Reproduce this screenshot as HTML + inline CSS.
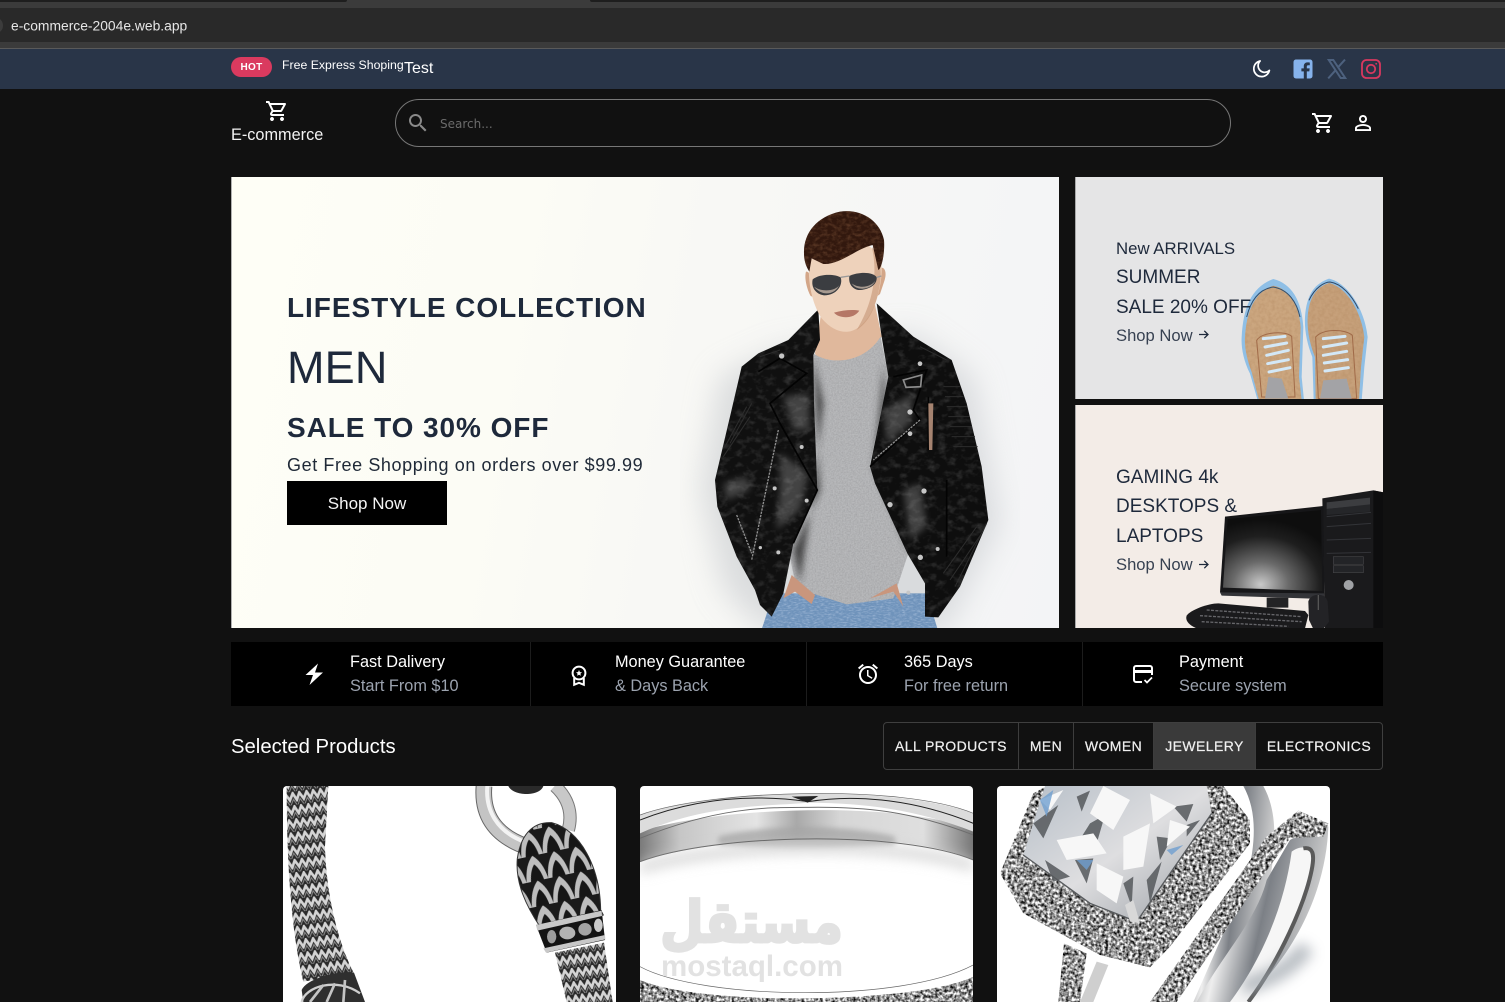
<!DOCTYPE html>
<html lang="en"><head><meta charset="utf-8"><title>E-commerce</title>
<style>
html,body{margin:0;padding:0;background:#111;}
body{width:1505px;height:1002px;position:relative;overflow:hidden;font-family:"Liberation Sans",Arial,sans-serif;color:#fff;}
.a{position:absolute;white-space:nowrap;}
.box{position:absolute;overflow:hidden;}
svg{display:block;}
.t{position:absolute;white-space:nowrap;color:#1e293b;line-height:30px;height:30px;}
.ft{position:absolute;white-space:nowrap;font-size:16.300px;line-height:24px;color:#fff;}
.fs{position:absolute;white-space:nowrap;font-size:16.300px;line-height:24px;color:#9ca3af;}
.tab{position:absolute;top:723px;height:46px;line-height:46px;font-size:14px;letter-spacing:.42px;text-align:center;color:#f0f0f0;border-right:1px solid #3d3d3d;box-sizing:border-box;-webkit-text-stroke:.2px #f0f0f0;}
</style></head><body>

<!-- browser chrome -->
<div class="box" style="left:0;top:0;width:1505px;height:8px;background:#3b3b3b"></div>
<div class="box" style="left:0;top:0;width:347px;height:2px;background:#1e1e1e;border-radius:0 0 6px 0"></div>
<div class="box" style="left:590px;top:0;width:915px;height:2px;background:#1e1e1e;border-radius:0 0 0 6px"></div>
<div class="box" style="left:0;top:8px;width:1505px;height:34px;background:#292929"></div>
<div class="box" style="left:-10px;top:18px;width:13px;height:15px;border-radius:50%;background:#3c3c3c"></div>
<div class="a" style="left:11px;top:16px;font-size:13.850px;line-height:18px;color:#e6e6e6;transform:translateY(.5px)">e-commerce-2004e.web.app</div>
<div class="box" style="left:0;top:42px;width:1505px;height:6px;background:#3b3b3b"></div>
<div class="box" style="left:0;top:48px;width:1505px;height:1px;background:#5a5a5a"></div>

<!-- top header -->
<div class="box" style="left:0;top:49px;width:1505px;height:40px;background:#293548"></div>
<div class="a" style="left:231px;top:57px;width:41px;height:20px;border-radius:10px;background:#da3a5f;text-align:center;font-size:10px;font-weight:700;line-height:21px;letter-spacing:.3px">HOT</div>
<div class="a" style="left:282px;top:57px;font-size:12.300px;line-height:16px;color:#fff">Free Express Shoping</div>
<div class="a" style="left:404px;top:59px;font-size:16px;line-height:18px;color:#fff;transform:translateY(1px)">Test</div>

<svg class="a" style="left:1251px;top:58px" width="21" height="21" viewBox="0 0 24 24" fill="none" stroke="#fff" stroke-width="2" stroke-linejoin="round"><path d="M21 14.200A9 9 0 1 1 10.400 3.400 7 7 0 0 0 21 14.200z"/></svg>
<svg class="a" style="left:1293px;top:59px" width="20" height="20" viewBox="0 0 20 20"><rect x=".5" y=".5" width="19" height="19" rx="2.500" fill="#86b3ec"/><path d="M13.800 20V12.400H16.300L16.700 9.400H13.800V7.600C13.800 6.700 14.100 6.200 15.300 6.200H16.800V3.500C16.400 3.450 15.600 3.400 14.600 3.400 12.400 3.400 10.800 4.700 10.800 7.200V9.400H8.400V12.400H10.800V20Z" fill="#293548"/></svg>
<svg class="a" style="left:1327px;top:59px" width="20" height="20" viewBox="0 0 20 20" fill="none" stroke="#4d617e" stroke-width="2"><path d="M1.800 1H6.300L18.200 19H13.700Z"/><path d="M18 .6L10.900 8.400M8.700 11.100L1.200 19.400"/></svg>
<svg class="a" style="left:1361px;top:59px" width="20" height="20" viewBox="0 0 20 20" fill="none" stroke="#d8385f" stroke-width="1.800"><rect x="1" y="1" width="18" height="18" rx="4.500"/><circle cx="10" cy="10" r="4.200"/><circle cx="15.200" cy="4.800" r=".9" fill="#d8385f" stroke="none"/></svg>

<!-- main header -->
<svg class="a" style="left:265px;top:99px" width="24" height="24" viewBox="0 0 24 24" fill="#fff"><path d="M15.550 13c.75 0 1.410-.41 1.750-1.030l3.580-6.490c.37-.66-.11-1.480-.87-1.480H5.210l-.94-2H1v2h2l3.600 7.590-1.350 2.440C4.520 15.370 5.48 17 7 17h12v-2H7l1.100-2h7.450zM6.160 6h12.150l-2.760 5H8.530L6.160 6zM7 18c-1.100 0-1.990.9-1.990 2s.89 2 1.990 2 2-.9 2-2-.9-2-2-2zm10 0c-1.100 0-1.990.9-1.990 2s.89 2 1.990 2 2-.9 2-2-.9-2-2-2z"/></svg>
<div class="a" style="left:231px;top:125px;font-size:16.300px;line-height:20px;color:#f2f2f2">E-commerce</div>
<div class="box" style="left:395px;top:99px;width:836px;height:48px;box-sizing:border-box;border:1px solid #777;border-radius:24px"></div>
<svg class="a" style="left:406px;top:111px" width="24" height="24" viewBox="0 0 24 24" fill="#8a8a8a"><path d="M15.500 14h-.79l-.28-.27C15.410 12.590 16 11.110 16 9.500 16 5.910 13.090 3 9.500 3S3 5.910 3 9.500 5.910 16 9.500 16c1.610 0 3.090-.59 4.230-1.570l.27.28v.79l5 4.990L20.490 19l-4.990-5zm-6 0C7.010 14 5 11.990 5 9.500S7.010 5 9.500 5 14 7.010 14 9.500 11.990 14 9.500 14z"/></svg>
<div class="a" style="left:440px;top:116px;font-family:'DejaVu Sans',sans-serif;font-size:12px;line-height:16px;color:#6b6b6b">Search...</div>
<svg class="a" style="left:1311px;top:111px" width="24" height="24" viewBox="0 0 24 24" fill="#fff"><path d="M15.550 13c.75 0 1.410-.41 1.750-1.030l3.580-6.490c.37-.66-.11-1.480-.87-1.480H5.210l-.94-2H1v2h2l3.600 7.590-1.350 2.440C4.520 15.370 5.48 17 7 17h12v-2H7l1.100-2h7.450zM6.160 6h12.150l-2.760 5H8.530L6.160 6zM7 18c-1.100 0-1.990.9-1.990 2s.89 2 1.990 2 2-.9 2-2-.9-2-2-2zm10 0c-1.100 0-1.990.9-1.990 2s.89 2 1.990 2 2-.9 2-2-.9-2-2-2z"/></svg>
<svg class="a" style="left:1351px;top:111px" width="24" height="24" viewBox="0 0 24 24" fill="#fff"><path d="M12 5.900c1.160 0 2.100.94 2.100 2.100s-.94 2.100-2.100 2.100S9.900 9.160 9.900 8s.94-2.100 2.100-2.100m0 9c2.970 0 6.100 1.460 6.100 2.100v1.100H5.900V17c0-.64 3.130-2.100 6.100-2.100M12 4C9.790 4 8 5.790 8 8s1.790 4 4 4 4-1.790 4-4-1.790-4-4-4zm0 9c-2.670 0-8 1.340-8 4v3h16v-3c0-2.660-5.330-4-8-4z"/></svg>

<!-- shared SVG filters -->
<svg width="0" height="0" style="position:absolute">
<defs>
<filter id="tee" x="0" y="0" width="100%" height="100%" color-interpolation-filters="sRGB"><feTurbulence type="fractalNoise" baseFrequency=".22" numOctaves="2" seed="4"/><feColorMatrix values="0 0 0 0 .55  0 0 0 0 .55  0 0 0 0 .56  .8 0 0 0 -.25"/><feComposite in2="SourceGraphic" operator="in" result="n"/><feMerge><feMergeNode in="SourceGraphic"/><feMergeNode in="n"/></feMerge></filter>
<filter id="leather" x="0" y="0" width="100%" height="100%" color-interpolation-filters="sRGB"><feTurbulence type="fractalNoise" baseFrequency=".035 .05" numOctaves="3" seed="9"/><feColorMatrix values="0 0 0 0 .36  0 0 0 0 .36  0 0 0 0 .36  1.100 0 0 0 -.52"/><feComposite in2="SourceGraphic" operator="in" result="n"/><feMerge><feMergeNode in="SourceGraphic"/><feMergeNode in="n"/></feMerge></filter>
<filter id="pave" x="0" y="0" width="100%" height="100%" color-interpolation-filters="sRGB"><feTurbulence type="fractalNoise" baseFrequency=".11" numOctaves="2" seed="3"/><feColorMatrix values="2 0 0 0 -.42  2 0 0 0 -.42  2 0 0 0 -.42  0 0 0 0 1"/><feComposite in2="SourceGraphic" operator="in"/></filter>
<filter id="jean" x="0" y="0" width="100%" height="100%" color-interpolation-filters="sRGB"><feTurbulence type="fractalNoise" baseFrequency=".09 .25" numOctaves="2" seed="5"/><feColorMatrix values="0 0 0 0 .82  0 0 0 0 .87  0 0 0 0 .95  1 0 0 0 -.42"/><feComposite in2="SourceGraphic" operator="in" result="n"/><feMerge><feMergeNode in="SourceGraphic"/><feMergeNode in="n"/></feMerge></filter>
<filter id="hair" x="0" y="0" width="100%" height="100%" color-interpolation-filters="sRGB"><feTurbulence type="fractalNoise" baseFrequency=".07 .1" numOctaves="3" seed="8"/><feColorMatrix values="0 0 0 0 .42  0 0 0 0 .27  0 0 0 0 .18  1.500 0 0 0 -.6"/><feComposite in2="SourceGraphic" operator="in" result="n"/><feMerge><feMergeNode in="SourceGraphic"/><feMergeNode in="n"/></feMerge></filter>
<filter id="fine" x="0" y="0" width="100%" height="100%" color-interpolation-filters="sRGB"><feTurbulence type="fractalNoise" baseFrequency=".1" numOctaves="2" seed="6"/><feColorMatrix values="0 0 0 0 .66  0 0 0 0 .49  0 0 0 0 .33  .6 0 0 0 -.22"/><feComposite in2="SourceGraphic" operator="in" result="n"/><feMerge><feMergeNode in="SourceGraphic"/><feMergeNode in="n"/></feMerge></filter>
<filter id="b4" x="-50%" y="-50%" width="200%" height="200%"><feGaussianBlur stdDeviation="10"/></filter>
<filter id="b8" x="-30%" y="-150%" width="160%" height="400%"><feGaussianBlur stdDeviation="8"/></filter>
<filter id="b20" x="-100%" y="-300%" width="300%" height="700%"><feGaussianBlur stdDeviation="20"/></filter>
<filter id="b40" x="-50%" y="-50%" width="200%" height="200%"><feGaussianBlur stdDeviation="45"/></filter>
</defs>
</svg>

<!-- hero -->
<div class="box" style="left:231px;top:177px;width:828px;height:451px;background:linear-gradient(100deg,#fefef6 0%,#fcfcf5 32%,#f8f8f5 55%,#f3f4f6 100%);box-shadow:inset 1px 0 0 #b0b0b0">
<svg style="position:absolute;left:449px;top:13px" width="340" height="440" viewBox="0 0 1020 1320">
  <path d="M300 480L120 560 60 900 130 1200 250 1320H800L960 1000 880 560 700 430Z" fill="#c3c6ca" opacity=".55" filter="url(#b40)"/>
  <path d="M246 1315L280 1210H740L772 1315Z" fill="#6f93bb" filter="url(#jean)"/>
  <path d="M425 360L585 345 605 440 540 530H425L405 490Z" fill="#e0b89c"/>
  <path d="M400 490C440 520 545 530 602 440L625 560 568 830 685 1090 640 1225 500 1243 350 1195 325 1080 412 900 398 640Z" fill="#b8b9bb" filter="url(#tee)"/>
  <path d="M400 500L420 900 340 1080 360 1180 400 900 430 640Z" fill="#2c2c2c" filter="url(#b4)" opacity=".8"/>
  <path d="M610 520L580 830 690 1090 640 830Z" fill="#2c2c2c" filter="url(#b4)" opacity=".6"/>
  <!-- jacket -->
  <path d="M415 358L325 450 235 490 185 530 150 680 105 870 112 950 170 1100 225 1200 240 1245 275 1280 310 1210 340 1060 412 905 402 640 400 495 420 450Z" fill="#101010" filter="url(#leather)"/>
  <path d="M590 340L605 440 625 560 570 830 585 880 682 1090 735 1180 735 1280 775 1282 840 1190 925 990 905 830 860 640 815 510 700 440Z" fill="#0e0e0e" filter="url(#leather)"/>
  <!-- gloss -->
  <g fill="#8a8a8a" filter="url(#b4)" opacity=".42">
    <path d="M300 790L385 850 360 960 290 1020 300 890Z"/><path d="M310 620L385 610 390 720 340 720Z"/>
    <path d="M610 660L700 610 690 700 620 760Z"/><path d="M670 900L720 880 740 1010 690 1050Z"/>
    <path d="M130 880L200 860 210 900 140 930Z"/>
  </g>
  <g fill="none" stroke="#030303" stroke-width="5">
    <path d="M235 545L300 505 380 550 270 640 300 700 412 900 340 1060"/>
    <path d="M640 560L740 540 700 660 720 690 570 830"/>
    <path d="M745 620L745 780M800 870L800 1100"/>
  </g>
  <g fill="none" stroke="#2d2d2d" stroke-width="3">
    <path d="M150 760L215 640M130 800L210 680M135 770L200 650"/>
    <path d="M790 590L840 590M795 620L850 620M800 650L860 650M805 680L868 680M810 710L876 710M815 740L885 740M820 770L893 770"/>
    <path d="M790 1150L890 1010M810 1170L905 1030M825 1190L920 1000"/>
    <path d="M240 500L300 480M720 470L800 510"/>
  </g>
  <path d="M295 720L215 1110M170 975L215 1090M720 690L580 810" fill="none" stroke="#8f8f8f" stroke-width="4" stroke-dasharray="7 3"/>
  <g fill="#c6c6c6">
    <circle cx="305" cy="498" r="8"/><circle cx="720" cy="521" r="7"/><circle cx="690" cy="666" r="8"/><circle cx="690" cy="731" r="7"/><circle cx="365" cy="771" r="6"/><circle cx="284" cy="895" r="6"/><circle cx="380" cy="932" r="6"/><circle cx="732" cy="903" r="8"/><circle cx="630" cy="944" r="8"/><circle cx="721" cy="1102" r="8"/><circle cx="773" cy="1077" r="6"/><circle cx="295" cy="1087" r="6"/><circle cx="241" cy="1073" r="5"/><circle cx="685" cy="1208" r="6"/>
  </g>
  <path d="M670 570L725 555 722 590 678 592Z" fill="none" stroke="#8d8d8d" stroke-width="5"/>
  <path d="M745 640L760 640 757 780 747 780Z" fill="#a58370"/>
  <path d="M310 1225L335 1155 405 1215 395 1242 345 1205Z" fill="#c9967d"/>
  <path d="M570 1225L650 1180 670 1250 640 1205Z" fill="#c9967d"/>
  <!-- head -->
  <path d="M378 245C395 240 400 300 410 325L392 318C382 300 372 265 378 245ZM600 235C612 228 622 245 614 270L600 312 590 320Z" fill="#d3a688"/>
  <path d="M388 215C382 270 395 340 425 385 450 415 480 428 505 425 545 420 580 370 595 310 608 260 607 220 600 200L560 160 430 170Z" fill="#eed2bb"/>
  <path d="M575 170C590 230 590 320 530 420 575 390 590 340 600 280 606 240 600 200 575 170Z" fill="#c49475" opacity=".6"/>
  <path d="M372 190C370 130 410 80 480 65 540 55 600 90 612 150 615 190 605 235 595 240L578 165C530 175 480 225 430 222L395 205 388 245C375 225 372 205 372 190Z" fill="#32180e" filter="url(#hair)"/>
  <path d="M398 268C420 250 465 252 482 262 490 285 470 316 432 316 405 312 393 290 398 268Z" fill="#3b3d41"/>
  <path d="M508 258C535 245 580 245 590 262 592 285 565 300 535 300 515 296 505 280 508 258Z" fill="#3b3d41"/>
  <path d="M402 290C430 310 470 300 478 285 465 315 425 320 402 290ZM515 280C540 298 575 290 586 272 575 300 530 305 515 280Z" fill="#a79a90"/>
  <path d="M482 262L508 258M590 262L604 258" stroke="#999" stroke-width="4"/>
  <path d="M462 368C490 360 520 358 538 362 520 390 475 385 462 368Z" fill="#b57766"/>
</svg>
</div>
<div class="t" style="left:287px;top:293px;font-size:28px;font-weight:700;letter-spacing:.95px">LIFESTYLE COLLECTION</div>
<div class="t" style="left:287px;top:353px;font-size:45px;letter-spacing:.2px">MEN</div>
<div class="t" style="left:287px;top:413px;font-size:28px;font-weight:700;letter-spacing:.93px">SALE TO 30% OFF</div>
<div class="t" style="left:287px;top:450px;font-size:18px;letter-spacing:.59px;color:#1f2937">Get Free Shopping on orders over $99.99</div>
<div class="box" style="left:287px;top:481px;width:160px;height:44px;background:#000;text-align:center;font-size:17px;line-height:46px;color:#f4f4f4">Shop Now</div>

<!-- card: shoes -->
<div class="box" style="left:1075px;top:177px;width:308px;height:222px;background:#e5e5e6;box-shadow:inset 1px 0 0 #a8a8a8">
<svg style="position:absolute;left:0;top:0" width="310" height="225" viewBox="0 0 930 675">
  <path d="M500 480C505 390 530 330 595 306 650 320 680 370 685 450L680 600 687 670H548L525 590C505 550 498 510 500 480Z" fill="#8fbfe6"/>
  <path d="M510 480C515 400 540 345 595 326 640 335 672 380 677 450L672 600 680 670H552L530 585C515 545 508 510 510 480Z" fill="#cba67f" filter="url(#fine)"/>
  <path d="M515 420C530 360 560 335 595 330 640 338 665 375 675 420" fill="none" stroke="#33506e" stroke-width="3"/>
  <path d="M545 490C560 465 630 460 650 478L660 660H560Z" fill="none" stroke="#a06a48" stroke-width="3"/>
  <path d="M580 600L620 605 640 665H570Z" fill="#a3a3a6"/>
  <path d="M565 485L630 478M570 510L635 498M575 535L640 520M578 560L640 548M582 585L645 572" stroke="#d3e8f7" stroke-width="9" stroke-linecap="round"/>
  <path d="M690 420C695 350 720 320 762 305 820 318 870 400 878 480L868 570 860 670H716L712 540C696 500 688 460 690 420Z" fill="#8fbfe6"/>
  <path d="M698 420C702 360 725 330 762 318 815 330 860 405 868 480L858 570 852 670H722L720 540C704 500 696 460 698 420Z" fill="#c6a07a" filter="url(#fine)"/>
  <path d="M702 370C720 330 750 315 765 315 800 320 830 355 850 395" fill="none" stroke="#2e4766" stroke-width="3"/>
  <path d="M722 480C745 455 810 455 832 475L845 665H730Z" fill="none" stroke="#a06a48" stroke-width="3"/>
  <path d="M745 610L815 605 830 665H735Z" fill="#a3a3a6"/>
  <path d="M745 485L810 478M745 510L815 498M745 535L815 523M748 558L818 548M750 582L820 572" stroke="#d3e8f7" stroke-width="9" stroke-linecap="round"/>
</svg>
</div>
<div class="t" style="left:1116px;top:234px;font-size:16.800px">New ARRIVALS</div>
<div class="t" style="left:1116px;top:263px;font-size:19px">SUMMER</div>
<div class="t" style="left:1116px;top:293px;font-size:19px">SALE 20% OFF</div>
<div class="t" style="left:1116px;top:321px;font-size:16.600px;color:#374151">Shop Now</div>
<svg class="a" style="left:1197px;top:328px" width="13" height="13" viewBox="0 0 13 13" fill="none" stroke="#1e293b" stroke-width="1.300"><path d="M2 6.500H11M7.300 2.800L11 6.500 7.300 10.200"/></svg>

<!-- card: computer -->
<div class="box" style="left:1075px;top:405px;width:308px;height:223px;background:#f3ece7;box-shadow:inset 1px 0 0 #a8a8a8">
<svg style="position:absolute;left:0;top:0" width="310" height="225" viewBox="0 0 930 675">
  <defs><radialGradient id="scr" cx=".38" cy=".92" r=".8"><stop offset="0" stop-color="#c9c9c9"/><stop offset=".35" stop-color="#6a6a6a"/><stop offset=".75" stop-color="#1e1e1e"/><stop offset="1" stop-color="#0e0e0e"/></radialGradient></defs>
  <path d="M742 280L895 256 925 262 925 675 750 675Z" fill="#1a1a1c"/>
  <path d="M755 292L885 278 885 300 755 312Z" fill="#3c3d40"/><path d="M755 312L885 298 885 320 755 330Z" fill="#252629"/>
  <path d="M755 335L888 322M755 365L888 355M755 405L888 400M755 445L888 442" stroke="#333438" stroke-width="3"/>
  <path d="M775 455H865V478H775ZM775 482H865V503H775Z" fill="#232427" stroke="#434346" stroke-width="2"/>
  <circle cx="821" cy="540" r="15" fill="#a0a2a5"/>
  <path d="M895 256L925 262V675H895Z" fill="#0d0d0e"/>
  <path d="M450 335L745 303 748 580 435 562Z" fill="#161618"/>
  <path d="M458 342L738 315 742 558 444 548Z" fill="url(#scr)"/>
  <path d="M435 562L748 565 745 582 440 572Z" fill="#333438"/>
  <path d="M575 578H640V608H575Z" fill="#232325"/>
  <path d="M335 632C345 615 400 595 430 595L690 618 700 630 690 670H365C340 660 330 645 335 632Z" fill="#1a1a1c"/>
  <path d="M395 615L680 635M375 632L680 650M380 650L640 664" stroke="#66666a" stroke-width="4" stroke-dasharray="9 4"/>
  <path d="M700 590C705 565 750 560 758 590L762 650 745 672H715L702 645Z" fill="#232326"/>
  <path d="M730 570V615" stroke="#555" stroke-width="4"/>
</svg>
</div>
<div class="t" style="left:1116px;top:463px;font-size:19px">GAMING 4k</div>
<div class="t" style="left:1116px;top:492px;font-size:19px">DESKTOPS &amp;</div>
<div class="t" style="left:1116px;top:522px;font-size:19px">LAPTOPS</div>
<div class="t" style="left:1116px;top:550px;font-size:16.600px;color:#374151">Shop Now</div>
<svg class="a" style="left:1197px;top:558px" width="13" height="13" viewBox="0 0 13 13" fill="none" stroke="#1e293b" stroke-width="1.300"><path d="M2 6.500H11M7.300 2.800L11 6.500 7.300 10.200"/></svg>

<!-- features -->
<div class="box" style="left:231px;top:642px;width:1152px;height:64px;background:#000"></div>
<div class="box" style="left:530px;top:642px;width:1px;height:64px;background:#1c1c1c"></div>
<div class="box" style="left:806px;top:642px;width:1px;height:64px;background:#1c1c1c"></div>
<div class="box" style="left:1082px;top:642px;width:1px;height:64px;background:#1c1c1c"></div>

<svg class="a" style="left:303px;top:662px" width="24" height="24" viewBox="0 0 24 24" fill="#fff"><path d="M15 1.500L2.500 13H10L6.500 23 20 10.500H12Z"/></svg>
<div class="ft" style="left:350px;top:650px">Fast Dalivery</div>
<div class="fs" style="left:350px;top:674px">Start From $10</div>

<svg class="a" style="left:567px;top:663px" width="24" height="24" viewBox="0 0 24 24" fill="none" stroke="#fff" stroke-width="2"><circle cx="12" cy="10" r="6.400"/><path d="M7.200 15V21.800L12 19.800 16.800 21.800V15"/><path d="M12 7L12.900 9.100 15 9.300 13.400 10.700 13.900 12.800 12 11.700 10.100 12.800 10.600 10.700 9 9.300 11.100 9.100Z" fill="#fff" stroke="none"/></svg>
<div class="ft" style="left:615px;top:650px">Money Guarantee</div>
<div class="fs" style="left:615px;top:674px">&amp; Days Back</div>

<svg class="a" style="left:856px;top:662px" width="24" height="24" viewBox="0 0 24 24" fill="#fff"><path d="M22 5.720l-4.600-3.860-1.290 1.530 4.600 3.860L22 5.720zM7.880 3.390L6.600 1.860 2 5.710l1.290 1.530 4.590-3.850zM12.500 8H11v6l4.750 2.850.75-1.230-4-2.370V8zM12 4c-4.970 0-9 4.030-9 9s4.030 9 9 9 9-4.030 9-9-4.030-9-9-9zm0 16c-3.870 0-7-3.130-7-7s3.130-7 7-7 7 3.130 7 7-3.130 7-7 7z"/></svg>
<div class="ft" style="left:904px;top:650px">365 Days</div>
<div class="fs" style="left:904px;top:674px">For free return</div>

<svg class="a" style="left:1131px;top:662px" width="24" height="24" viewBox="0 0 24 24" fill="none" stroke="#fff" stroke-width="2"><path d="M11 20H5C3.900 20 3 19.100 3 18V6C3 4.900 3.900 4 5 4H19C20.100 4 21 4.900 21 6V13"/><path d="M3 9.500H21" stroke-width="3"/><path d="M13.500 18L16 20.500 21 15.500" stroke-width="1.700"/></svg>
<div class="ft" style="left:1179px;top:650px">Payment</div>
<div class="fs" style="left:1179px;top:674px">Secure system</div>

<!-- tabs -->
<div class="a" style="left:231px;top:735px;font-size:20.300px;line-height:24px;color:#fff">Selected Products</div>
<div class="box" style="left:883px;top:722px;width:500px;height:48px;box-sizing:border-box;border:1px solid #3f3f3f;border-radius:4px;background:#111"></div>
<div class="box" style="left:1154px;top:723px;width:101px;height:46px;background:#3a3a3a"></div>
<div class="tab" style="left:884px;width:135px">ALL PRODUCTS</div>
<div class="tab" style="left:1019px;width:55px">MEN</div>
<div class="tab" style="left:1074px;width:80px">WOMEN</div>
<div class="tab" style="left:1154px;width:102px">JEWELERY</div>
<div class="tab" style="left:1256px;width:126px;border:0">ELECTRONICS</div>

<!-- product 1 -->
<div class="box" style="left:283px;top:786px;width:333px;height:216px;background:#fff;border-radius:4px 4px 0 0">
<svg style="position:absolute;left:-3px;top:-6px" width="340" height="222" viewBox="0 0 1020 666">
  <defs>
    <pattern id="ch" width="42" height="40" patternUnits="userSpaceOnUse" patternTransform="rotate(-8)">
      <rect width="42" height="40" fill="#2a2a2a"/>
      <path d="M-2 30L10 5 21 25 32 5 44 30" fill="none" stroke="#d4d4d4" stroke-width="8"/>
      <path d="M-2 48L10 23 21 43 32 23 44 48" fill="none" stroke="#8f8f8f" stroke-width="3"/>
    </pattern>
    <pattern id="sc" width="66" height="76" patternUnits="userSpaceOnUse" patternTransform="rotate(-12)">
      <rect width="66" height="76" fill="#1a1a1a"/>
      <path d="M0 76C5 30 22 10 33 0 44 10 61 30 66 76" fill="#bdbdbd"/>
      <path d="M13 76C17 48 26 34 33 26 40 34 49 48 53 76Z" fill="#161616"/>
    </pattern>
  </defs>
  <path d="M20 18L145 18 135 200C138 320 165 470 222 580L70 605C40 480 20 300 20 18Z" fill="url(#ch)"/>
  <path d="M65 630C80 595 180 570 222 578L255 666H70Z" fill="#2f2f2f"/>
  <path d="M65 666C75 620 170 590 240 640" fill="none" stroke="#cfcfcf" stroke-width="7"/>
  <path d="M90 666L130 615M140 666L165 610M190 666L195 600" stroke="#c4c4c4" stroke-width="8"/>
  <path d="M612 18C605 100 640 165 740 200" fill="none" stroke="#666" stroke-width="50"/>
  <path d="M612 18C605 100 640 165 740 200" fill="none" stroke="#c4c4c4" stroke-width="44"/>
  <path d="M622 18C616 90 650 155 735 186" fill="none" stroke="#f3f3f3" stroke-width="12"/>
  <path d="M825 18C860 50 880 95 865 150" fill="none" stroke="#777" stroke-width="40"/>
  <path d="M825 18C860 50 880 95 865 150" fill="none" stroke="#c8c8c8" stroke-width="34"/>
  <path d="M685 18C700 50 780 50 790 18Z" fill="#2a2a2a"/>
  <path d="M712 235C725 150 770 125 815 128 900 150 960 260 962 390L970 405 780 440C740 380 705 310 712 235Z" fill="url(#sc)" stroke="#333" stroke-width="3"/>
  <path d="M768 435L965 390 975 480 800 518Z" fill="#141414"/>
  <path d="M768 435L965 392 966 408 772 452ZM790 505L975 465 976 478 798 518Z" fill="#c8c8c8"/>
  <ellipse cx="862" cy="459" rx="24" ry="19" fill="#b3b3b3"/><ellipse cx="915" cy="448" rx="20" ry="19" fill="#a3a3a3"/><ellipse cx="955" cy="436" rx="13" ry="20" fill="#c9c9c9"/><ellipse cx="815" cy="470" rx="14" ry="20" fill="#9c9c9c"/>
  <path d="M825 518L972 488 998 666H860Z" fill="url(#ch)"/>
</svg>
</div>

<!-- product 2 -->
<div class="box" style="left:640px;top:786px;width:333px;height:216px;background:#fff;border-radius:4px 4px 0 0">
<svg style="position:absolute;left:-5px;top:-6px" width="345" height="222" viewBox="0 0 1035 666">
  <defs>
    <linearGradient id="rb" x1="0" x2="1" y1="0" y2="0"><stop offset="0" stop-color="#7a7a7a"/><stop offset=".12" stop-color="#c6c6c6"/><stop offset=".35" stop-color="#e4e4e4"/><stop offset=".47" stop-color="#a9a9a9"/><stop offset=".6" stop-color="#d6d6d6"/><stop offset=".85" stop-color="#dfdfdf"/><stop offset="1" stop-color="#777"/></linearGradient>
  </defs>
  <path d="M15 245C220 170 800 140 1015 240V150C800 60 240 80 15 155Z" fill="url(#rb)"/>
  <path d="M15 160C220 70 400 80 520 68 700 70 850 90 1015 155V100C800 20 240 20 15 105Z" fill="#dcdcdc"/>
  <path d="M250 170C400 130 640 135 780 170L780 195C620 205 400 205 250 195Z" fill="#a6a6a6" filter="url(#b8)" opacity=".8"/>
  <path d="M15 120C220 40 400 48 520 65 640 45 820 50 1015 130" fill="none" stroke="#222" stroke-width="3"/>
  <path d="M15 105C220 30 800 10 1015 100" fill="none" stroke="#666" stroke-width="2"/>
  <path d="M15 175C250 80 400 82 520 82 680 80 820 90 1015 165" fill="none" stroke="#6d6d6d" stroke-width="3"/>
  <path d="M15 245C240 160 800 150 1015 240" fill="none" stroke="#4d4d4d" stroke-width="3"/>
  <path d="M470 50L550 48 518 68Z" fill="#222"/>
  <path d="M15 265C240 190 800 180 1015 260" fill="none" stroke="#cfcfcf" stroke-width="26" filter="url(#b20)"/>
  <path d="M15 600V666H1015V590C850 670 200 680 15 600Z" fill="#d4d4d4" filter="url(#pave)"/>
  <path d="M15 560C200 660 800 670 1015 555" fill="none" stroke="#666" stroke-width="2"/>
</svg>
<div class="a" style="left:22px;top:108px;width:181px;text-align:center;font-family:'DejaVu Sans',sans-serif;font-weight:700;font-size:50px;line-height:60px;color:#e2e2e2;-webkit-text-stroke:2.500px #e2e2e2;transform:scaleY(1.150);transform-origin:50% 70%" dir="rtl" lang="ar">مستقل</div>
<div class="a" style="left:21px;top:163px;font-size:29.500px;font-weight:700;line-height:36px;color:#e2e2e2">mostaql.com</div>
</div>

<!-- product 3 -->
<div class="box" style="left:997px;top:786px;width:333px;height:216px;background:#fff;border-radius:4px 4px 0 0">
<svg style="position:absolute;left:-7px;top:-6px" width="345" height="222" viewBox="0 0 1035 666">
  <defs>
    <linearGradient id="bd" x1="0" x2="1" y1="0" y2=".3"><stop offset="0" stop-color="#5d6064"/><stop offset=".35" stop-color="#eee"/><stop offset=".6" stop-color="#7c8086"/><stop offset="1" stop-color="#d4d4d4"/></linearGradient>
    <linearGradient id="dm" x1="0" x2="1" y1="0" y2="1"><stop offset="0" stop-color="#b7bfc8"/><stop offset=".5" stop-color="#dedee0"/><stop offset="1" stop-color="#9a9fa5"/></linearGradient>
  </defs>
  <path d="M760 18L820 18C860 90 860 180 840 300L720 666H610L770 300C800 180 800 90 760 18Z" fill="url(#bd)"/>
  <path d="M850 310L700 666M905 220L760 666" fill="none" stroke="#444" stroke-width="5"/>
  <path d="M620 666C700 520 800 420 830 300L900 180C960 150 990 130 1015 140 1010 300 940 500 760 666Z" fill="url(#bd)"/>
  <path d="M905 215C930 195 975 195 970 240 960 360 880 530 775 666H720C800 560 880 400 905 215Z" fill="#f6f6f6"/>
  <path d="M940 205C968 200 975 220 965 270 945 370 870 540 775 666" fill="none" stroke="#5a5a5a" stroke-width="12"/>
  <path d="M760 620C830 600 900 570 950 500" fill="none" stroke="#9aa1a9" stroke-width="50" filter="url(#b20)" opacity=".7"/>
  <path d="M480 666L830 170 925 92 1015 130 1000 170 900 175 810 300 560 666Z" fill="#c9c9c9" filter="url(#pave)"/>
  <path d="M270 666L320 545 355 555 310 666Z" fill="#cfcfcf"/>
  <path d="M205 666L222 490 290 520 270 666Z" fill="#c9c9c9" filter="url(#pave)"/>
  <path d="M30 280L130 40 170 18H700L780 120 780 190 540 500 480 562 330 525 100 400Z" fill="#c9c9c9" filter="url(#pave)"/>
  <path d="M100 225L165 18H650L665 100 440 425 300 370Z" fill="url(#dm)"/>
  <g fill="#55585c" opacity=".85">
    <path d="M130 130L205 75 160 175ZM300 130L345 105 320 190 275 170ZM500 170L545 175 510 240ZM255 240L310 235 290 310ZM165 240L240 290 190 305ZM470 300L515 245 480 370ZM550 80L610 72 590 125ZM260 50L300 32 275 95ZM400 310L430 290 425 380ZM350 60L395 70 370 110ZM590 135L630 120 590 170Z"/>
  </g>
  <g fill="#f7f7f7">
    <path d="M340 18L420 60 370 150 300 100ZM200 180L310 160 350 220 230 240ZM400 170L480 130 460 260 400 270ZM480 40L560 80 490 130ZM320 250L400 290 380 370 320 330ZM150 60L220 30 180 90ZM540 120L600 140 530 200Z"/>
  </g>
  <g fill="#6f9fd0" opacity=".8">
    <path d="M150 60L190 30 170 110ZM530 210L580 195 545 225ZM260 240L310 240 290 270Z"/>
  </g>
  <path d="M100 225L300 370 440 425 665 100" fill="none" stroke="#585b5e" stroke-width="4"/>
  <path d="M405 375L430 360 450 430 420 425Z" fill="#d8d8d8"/>
</svg>
</div>

</body></html>
